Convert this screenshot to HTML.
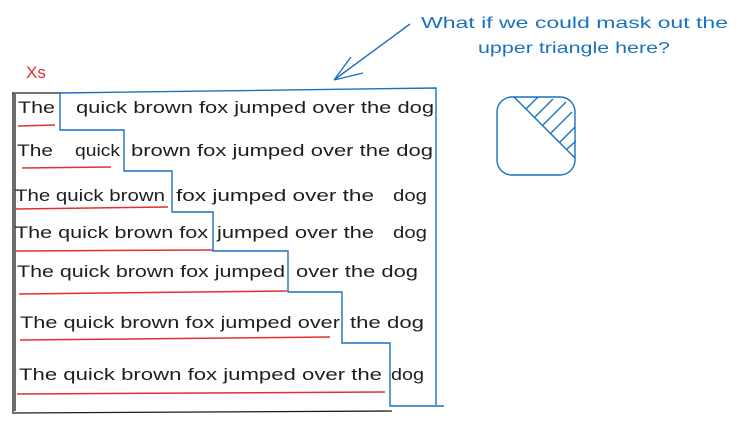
<!DOCTYPE html>
<html><head><meta charset="utf-8"><style>
html,body{margin:0;padding:0;background:#fff;width:738px;height:424px;overflow:hidden}
svg{display:block}
text{font-family:"Liberation Sans","DejaVu Sans",sans-serif}
</style></head><body>
<svg width="738" height="424" viewBox="0 0 738 424" xmlns="http://www.w3.org/2000/svg">
<g fill="#1e1e1e" font-size="17">
<text x="18" y="113" textLength="37" lengthAdjust="spacingAndGlyphs">The</text>
<text x="76" y="113" textLength="358" lengthAdjust="spacingAndGlyphs">quick brown fox jumped over the dog</text>
<text x="17" y="156" textLength="36" lengthAdjust="spacingAndGlyphs">The</text>
<text x="75" y="156" textLength="45" lengthAdjust="spacingAndGlyphs">quick</text>
<text x="131" y="156" textLength="302" lengthAdjust="spacingAndGlyphs">brown fox jumped over the dog</text>
<text x="15" y="201" textLength="150" lengthAdjust="spacingAndGlyphs">The quick brown</text>
<text x="176" y="201" textLength="198" lengthAdjust="spacingAndGlyphs">fox jumped over the</text>
<text x="393" y="201" textLength="34" lengthAdjust="spacingAndGlyphs">dog</text>
<text x="15" y="238" textLength="193" lengthAdjust="spacingAndGlyphs">The quick brown fox</text>
<text x="217" y="238" textLength="157" lengthAdjust="spacingAndGlyphs">jumped over the</text>
<text x="393" y="238" textLength="34" lengthAdjust="spacingAndGlyphs">dog</text>
<text x="17" y="277" textLength="268" lengthAdjust="spacingAndGlyphs">The quick brown fox jumped</text>
<text x="296" y="277" textLength="122" lengthAdjust="spacingAndGlyphs">over the dog</text>
<text x="20" y="328" textLength="320" lengthAdjust="spacingAndGlyphs">The quick brown fox jumped over</text>
<text x="350" y="328" textLength="74" lengthAdjust="spacingAndGlyphs">the dog</text>
<text x="19" y="380" textLength="363" lengthAdjust="spacingAndGlyphs">The quick brown fox jumped over the</text>
<text x="391" y="380" textLength="33" lengthAdjust="spacingAndGlyphs">dog</text>
</g>
<g stroke="#e03131" stroke-width="1.5" fill="none">
<path d="M18 126 L55 125"/>
<path d="M22 168 L111 167"/>
<path d="M16 209 L168 207"/>
<path d="M16 251 L213 250"/>
<path d="M19 294 L287 291"/>
<path d="M20 340 L330 337"/>
<path d="M17 394 L385 392"/>
</g>
<g stroke="#1e1e1e" stroke-width="1.3" fill="none">
<path d="M13 93 L13 412"/><path d="M15 94 L15 411"/>
<path d="M12 93 L60 93"/>
<path d="M12 413 L392 411"/>
</g>
<g stroke="#1971c2" stroke-width="1.4" fill="none">
<path d="M60 93 L60 130 L124 130 L124 171 L172 171 L172 212 L213 212 L213 251 L288 251 L288 292 L342 292 L342 343 L390 343 L390 406 L444 406"/>
<path d="M60 93 L436 88 L436 405"/>
<path d="M410 24 L334 80 M334 80 L351 57 M334 80 L363 73"/>
<rect x="497" y="97" width="78" height="78" rx="15"/>
<path d="M514 97 L575 158"/>
<path d="M526 109 L538 97 M535 117 L553 99 M543 125 L566 102 M551 133 L572 112 M560 142 L575 127 M567 149 L576 141"/>
</g>
<g fill="#1971c2" font-size="16">
<text x="421" y="28" textLength="307" lengthAdjust="spacingAndGlyphs">What if we could mask out the</text>
<text x="478" y="53" textLength="192" lengthAdjust="spacingAndGlyphs">upper triangle here?</text>
</g>
<text x="26" y="78" fill="#e03131" font-size="17">Xs</text>
</svg>
</body></html>
